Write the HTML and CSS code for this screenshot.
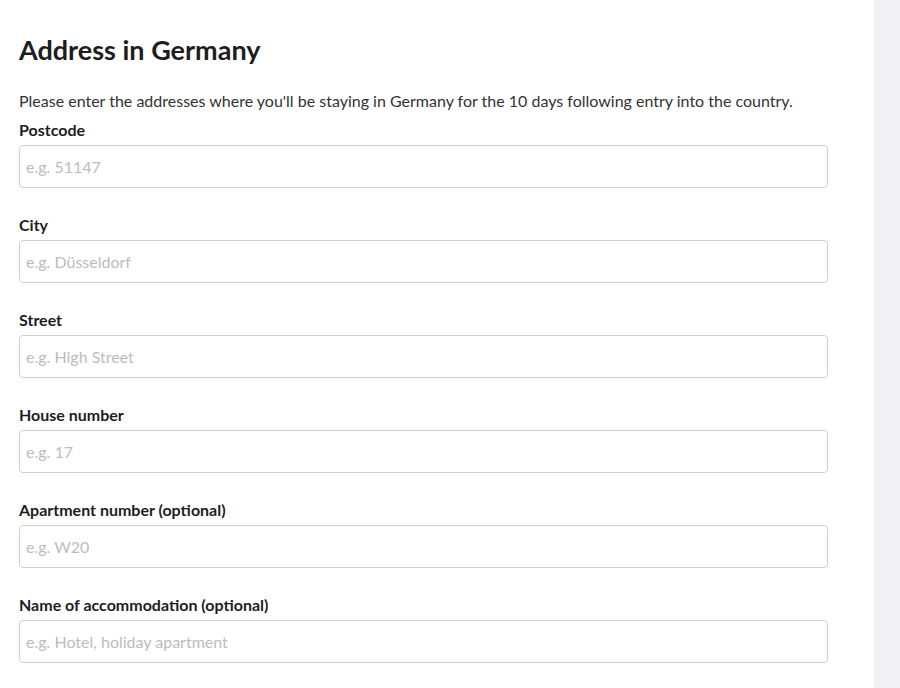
FILE: index.html
```html
<!DOCTYPE html>
<html lang="en">
<head>
    <meta charset="UTF-8">
    <meta name="viewport" content="width=device-width, initial-scale=1.0">
    <title>Address in Germany</title>
    <link rel="stylesheet" href="styles.css">
</head>
<body>
    <div class="page">
        <main class="content">
            <h1 class="title">Address in Germany</h1>
            <p class="intro">Please enter the addresses where you'll be staying in Germany for the 10 days following entry into the country.</p>

            <div class="field">
                <label class="label" for="postcode">Postcode</label>
                <input class="input" id="postcode" type="text" placeholder="e.g. 51147">
            </div>
            <div class="field">
                <label class="label" for="city">City</label>
                <input class="input" id="city" type="text" placeholder="e.g. Düsseldorf">
            </div>
            <div class="field">
                <label class="label" for="street">Street</label>
                <input class="input" id="street" type="text" placeholder="e.g. High Street">
            </div>
            <div class="field">
                <label class="label" for="house">House number</label>
                <input class="input" id="house" type="text" placeholder="e.g. 17">
            </div>
            <div class="field">
                <label class="label" for="apartment">Apartment number (optional)</label>
                <input class="input" id="apartment" type="text" placeholder="e.g. W20">
            </div>
            <div class="field">
                <label class="label" for="accommodation">Name of accommodation (optional)</label>
                <input class="input" id="accommodation" type="text" placeholder="e.g. Hotel, holiday apartment">
            </div>
        </main>
        <aside class="sidebar"></aside>
    </div>
</body>
</html>
```

FILE: styles.css
```css
body {
    margin: 0;
    font-family: Lato, 'Open Sans', sans-serif;
    color: #1d1d1f;
    background-color: white;
}

.page {
    display: flex;
    min-height: 688px;
}

.content {
    flex: 1;
    padding: 28px 46px 0 19px;
}

.sidebar {
    width: 26px;
    background-color: #f2f2f4;
}

.title {
    font-size: 27px;
    font-weight: 700;
    margin: 0 0 18px 0;
    line-height: 44px;
}

.intro {
    font-size: 16px;
    margin: 0 0 7px 0;
    color: #333;
    line-height: 22px;
}

.field {
    display: flex;
    flex-direction: column;
    margin-bottom: 26px;
}

.label {
    font-size: 16px;
    font-weight: 700;
    line-height: 22px;
    margin-bottom: 4px;
}

.input {
    box-sizing: border-box;
    height: 43px;
    width: 100%;
    border: 1px solid #cfcfcf;
    border-radius: 4px;
    padding: 0 6px;
    font-family: inherit;
    font-size: 16px;
    color: #333;
}

.input::placeholder {
    color: #bcbcbc;
}
```
